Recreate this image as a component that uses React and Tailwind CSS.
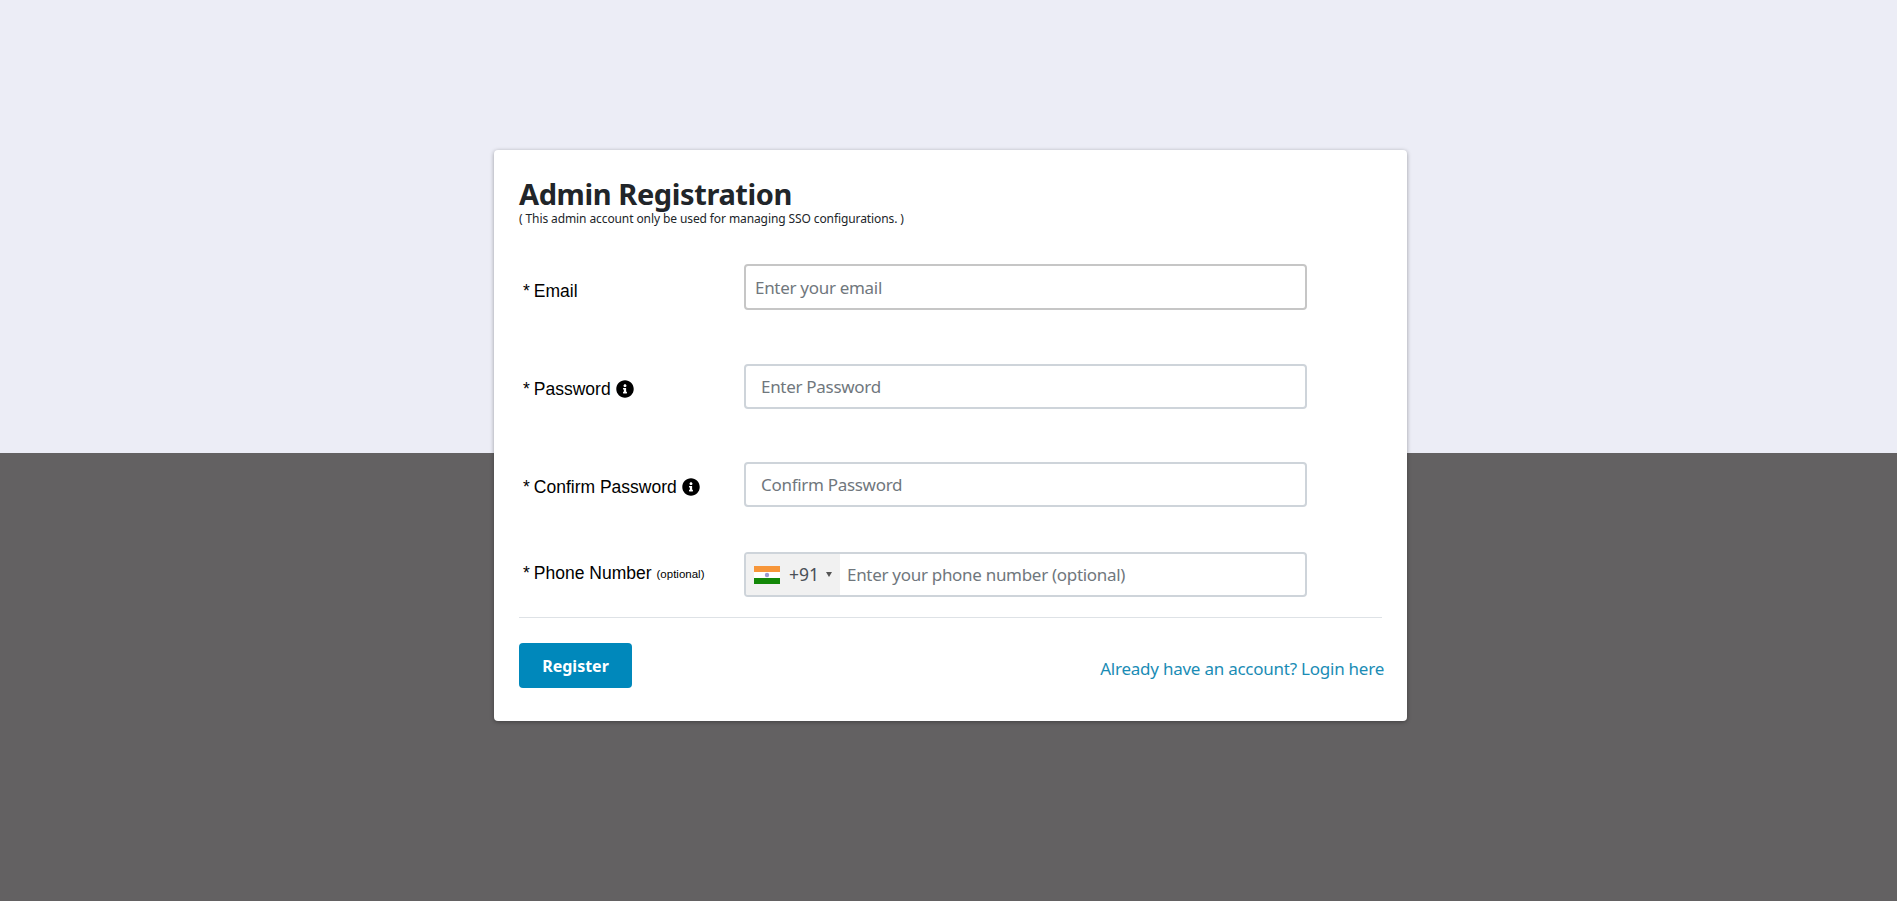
import { FaInfoCircle } from "react-icons/fa";

const ui = "font-['Noto_Sans',sans-serif]";

function Label({ text, info, note }) {
  return (
    <label className="w-[225px] flex items-center pl-[4px] font-['Liberation_Sans',sans-serif] text-[17.5px] leading-[24px] text-black whitespace-nowrap">
      <span className="mr-[4px]">*</span>
      {text}
      {info && <FaInfoCircle className="ml-[5px] text-[18px]" />}
      {note && <span className="ml-[5px] text-[11.5px] mt-[3px]">(optional)</span>}
    </label>
  );
}

function IndiaFlag() {
  return (
    <svg width="26" height="18" viewBox="0 0 26 18">
      <rect width="26" height="6" fill="#f7963a" />
      <rect y="6" width="26" height="6" fill="#ffffff" />
      <rect y="12" width="26" height="6" fill="#138808" />
      <circle cx="13" cy="9" r="2.2" fill="#9a9ad0" />
    </svg>
  );
}

export default function App() {
  return (
    <div className="h-[901px] pt-[150px] overflow-hidden bg-[linear-gradient(#ecedf6_453px,#636162_453px)]">
      <div className="w-[913px] h-[571px] ml-[494px] px-[25px] bg-white rounded-[4px] shadow-[0_1px_4px_rgba(0,0,0,0.35)]">
        <h1 className={`${ui} pt-[26px] text-[29px] leading-[36px] font-bold tracking-[-0.4px] text-[#212529]`}>Admin Registration</h1>
        <p className={`${ui} text-[12px] leading-[13px] tracking-[-0.1px] text-[#212529]`}>( This admin account only be used for managing SSO configurations. )</p>

        <div className="flex items-center h-[46px] mt-[39px]">
          <div className="mt-[7px]"><Label text="Email" /></div>
          <input
            placeholder="Enter your email"
            className={`${ui} w-[563px] h-[46px] px-[9px] border-2 border-[#c6c6c6] rounded-[4px] text-[17px] tracking-[-0.3px] outline-none placeholder:text-[#70777d]`}
          />
        </div>

        <div className="flex items-center h-[45px] mt-[54px]">
          <div className="mt-[5px]"><Label text="Password" info /></div>
          <input
            placeholder="Enter Password"
            className={`${ui} w-[563px] h-[45px] px-[15px] border-2 border-[#ced4da] rounded-[4px] text-[17px] tracking-[-0.3px] outline-none placeholder:text-[#70777d]`}
          />
        </div>

        <div className="flex items-center h-[45px] mt-[53px]">
          <div className="mt-[5px]"><Label text="Confirm Password" info /></div>
          <input
            placeholder="Confirm Password"
            className={`${ui} w-[563px] h-[45px] px-[15px] border-2 border-[#ced4da] rounded-[4px] text-[17px] tracking-[-0.3px] outline-none placeholder:text-[#70777d]`}
          />
        </div>

        <div className="flex items-center h-[43px] mt-[46px]">
          <div className="-mt-[4px]"><Label text="Phone Number" note /></div>
          <div className="flex w-[563px] h-[45px] border-2 border-[#ced4da] rounded-[4px] overflow-hidden">
            <div className={`${ui} flex items-center w-[94px] pl-[8px] bg-[#f1f1f1] text-[17.5px] text-[#495057]`}>
              <IndiaFlag />
              <span className="ml-[9px]">+91</span>
              <span className="ml-[7px] w-0 h-0 border-x-[3px] border-x-transparent border-t-[5px] border-t-[#555555]"></span>
            </div>
            <input
              placeholder="Enter your phone number (optional)"
              className={`${ui} flex-1 px-[7px] text-[17px] tracking-[-0.3px] outline-none placeholder:text-[#70777d]`}
            />
          </div>
        </div>

        <hr className="mt-[21px] border-[#dee2e6]" />

        <div className="flex justify-between mt-[25px]">
          <button className={`${ui} w-[113px] h-[45px] bg-[#0088bb] rounded-[4px] text-white text-[16px] font-bold`}>Register</button>
          <a className={`${ui} -mr-[2px] mt-[13px] text-[17px] leading-[25px] tracking-[-0.24px] text-[#1a8cb5]`}>Already have an account? Login here</a>
        </div>
      </div>
    </div>
  );
}
